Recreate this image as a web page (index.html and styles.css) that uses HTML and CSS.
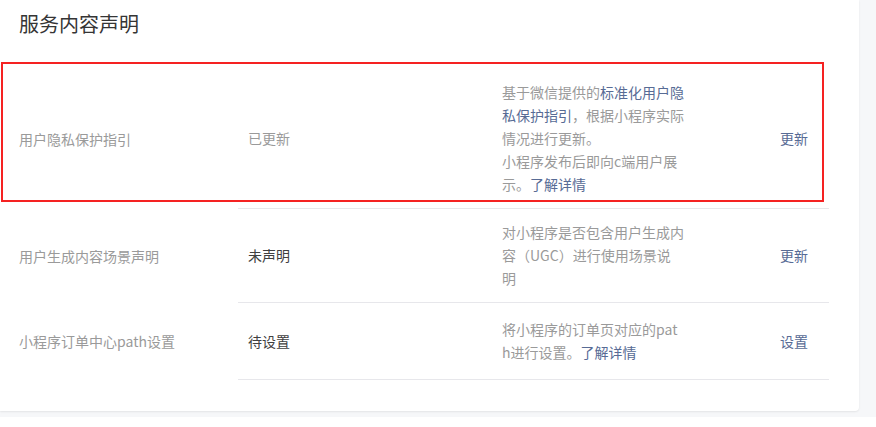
FILE: index.html
```html
<!DOCTYPE html>
<html lang="zh-CN">
<head>
<meta charset="utf-8">
<title>服务内容声明</title>
<link rel="stylesheet" href="styles.css">
</head>
<body>
<div class="page">
  <div class="card">
    <h2 class="title">服务内容声明</h2>
    <div class="table">
      <div class="row highlight-row">
        <div class="cell-label">用户隐私保护指引</div>
        <div class="row-body">
          <div class="cell-status muted">已更新</div>
          <div class="cell-desc">基于微信提供的<a class="link">标准化用户隐<br>私保护指引</a>，根据小程序实际<br>情况进行更新。<br>小程序发布后即向c端用户展<br>示。<a class="link">了解详情</a></div>
          <div class="cell-action"><a class="link">更新</a></div>
        </div>
        <div class="highlight"></div>
      </div>
      <div class="row">
        <div class="cell-label">用户生成内容场景声明</div>
        <div class="row-body">
          <div class="cell-status">未声明</div>
          <div class="cell-desc">对小程序是否包含用户生成内<br>容（UGC）进行使用场景说<br>明</div>
          <div class="cell-action"><a class="link">更新</a></div>
        </div>
      </div>
      <div class="row row-short">
        <div class="cell-label">小程序订单中心path设置</div>
        <div class="row-body">
          <div class="cell-status">待设置</div>
          <div class="cell-desc">将小程序的订单页对应的pat<br>h进行设置。<a class="link">了解详情</a></div>
          <div class="cell-action"><a class="link">设置</a></div>
        </div>
      </div>
    </div>
  </div>
</div>
</body>
</html>
```

FILE: styles.css
```css
* { box-sizing: border-box; }
html, body {
  margin: 0;
  padding: 0;
  background: #ffffff;
  font-family: "Noto Sans CJK SC", "Noto Sans", sans-serif;
}
.page {
  height: 417px;
  background: #f6f7f9;
  padding: 0 17px 6px 0;
}
.card {
  height: 411px;
  background: #ffffff;
  border-radius: 0 0 4px 0;
  box-shadow: 0 1px 2px rgba(0, 0, 0, 0.08);
}
.title {
  margin: 0;
  padding: 10px 0 0 19px;
  font-size: 20px;
  line-height: 28px;
  font-weight: normal;
  color: #353535;
}
.table {
  margin-top: 31px;
  width: 829px;
}
.row {
  position: relative;
  display: flex;
  font-size: 14px;
  line-height: 23px;
}
.cell-label {
  width: 238px;
  flex: none;
  padding-left: 19px;
  color: #9a9a9a;
  display: flex;
  align-items: center;
}
.row-body {
  flex: 1;
  display: flex;
  align-items: center;
  border-bottom: 1px solid #e7e7eb;
  padding: 12px 0;
}
.row-short .row-body {
  min-height: 77px;
}
.cell-status {
  width: 254px;
  flex: none;
  padding-left: 10px;
  color: #404040;
}
.cell-status.muted { color: #9a9a9a; }
.cell-desc {
  width: 278px;
  flex: none;
  padding-left: 10px;
  color: #9a9a9a;
}
.cell-action {
  flex: 1;
  padding-left: 10px;
}
.link {
  color: #576b95;
  text-decoration: none;
  cursor: pointer;
}
.highlight {
  position: absolute;
  left: 1px;
  top: -7px;
  width: 823px;
  height: 140px;
  border: 2px solid #f52222;
  pointer-events: none;
}
```
